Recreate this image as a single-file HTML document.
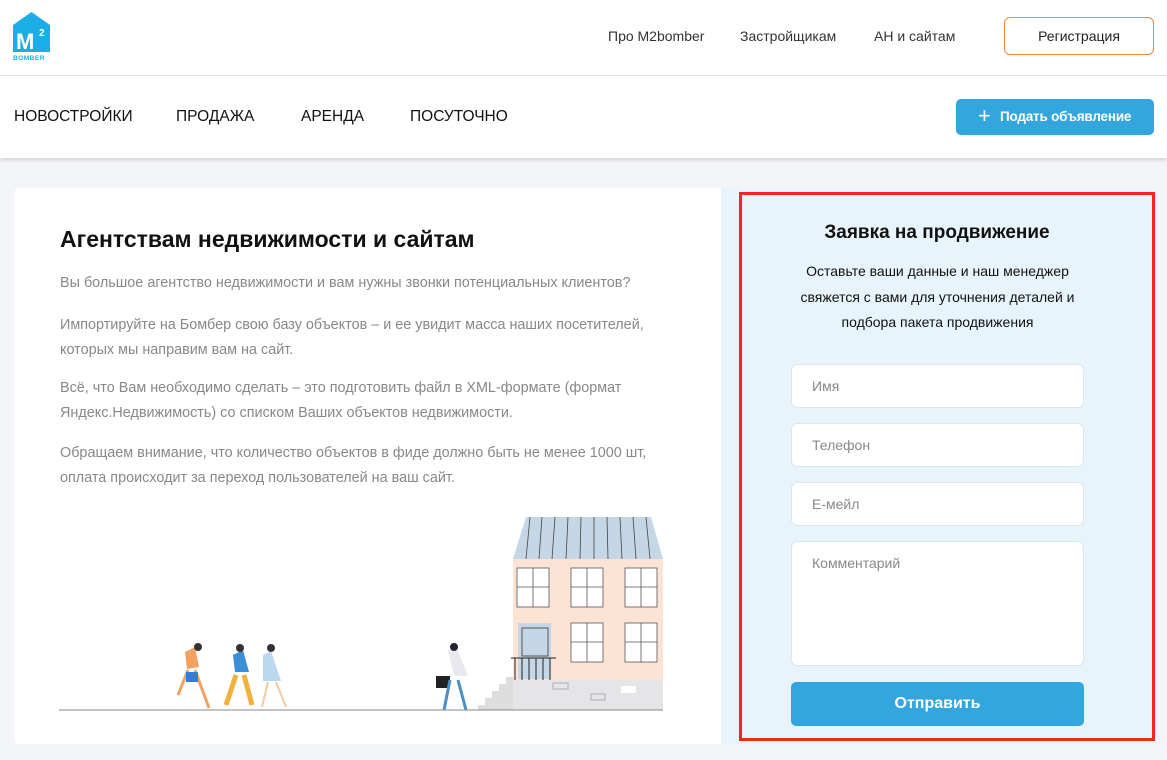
<!DOCTYPE html>
<html><head><meta charset="utf-8"><style>
*{margin:0;padding:0;box-sizing:border-box}
body{width:1167px;height:760px;background:#f4f5f8;font-family:"Liberation Sans",Arial,sans-serif;position:relative;overflow:hidden;color:#222}
.hdr{position:absolute;left:0;top:0;width:1167px;height:158px;background:#fff;box-shadow:0 2px 4px rgba(0,0,0,.15)}
.line{position:absolute;left:0;top:75px;width:1167px;height:1px;background:#dfe2e4}
.t{position:absolute;font-size:14px;color:#333}
.nav{position:absolute;top:108px;font-size:15.5px;color:#111}
.reg{position:absolute;left:1004px;top:17px;width:150px;height:38px;border:1px solid #f08a3c;border-radius:6px;font-size:14px;text-align:center;line-height:36px;color:#222}
.add{position:absolute;left:956px;top:99px;width:198px;height:36px;background:#33a6de;border-radius:5px;color:#fff;font-size:13.5px;font-weight:bold;line-height:36px;padding-left:44px;letter-spacing:-0.2px}
.card{position:absolute;left:14px;top:188px;width:707px;height:556px;background:#fff;border-radius:6px 0 0 6px}
.p{position:absolute;left:60px;font-size:14.4px;color:#888;line-height:25px;width:600px}
.right{position:absolute;left:721px;top:188px;width:431px;height:556px;background:#e8f4fb}
.red{position:absolute;left:739px;top:192px;width:416px;height:549px;border:3px solid #f0281e}
.in{position:absolute;left:791px;width:293px;height:44px;background:#fff;border:1px solid #dde6ec;border-radius:6px;font-size:14px;color:#888;padding:13px 20px}
</style></head><body>
<div class="hdr"></div>
<div class="line"></div>
<svg style="position:absolute;left:13px;top:12px" width="38" height="50" viewBox="0 0 38 50"><path d="M0 13 L18.5 0 L37 13 V40 H0Z" fill="#1aaee4"/><text x="3" y="37" font-size="22" font-weight="bold" fill="#fff" font-family="Liberation Sans">M</text><text x="26" y="24" font-size="10" font-weight="bold" fill="#fff" font-family="Liberation Sans">2</text><text x="0" y="48" font-size="6.5" font-weight="bold" fill="#1aaee4" font-family="Liberation Sans" letter-spacing="0.5">BOMBER</text></svg>
<div class="t" style="left:608px;top:28px">Про M2bomber</div>
<div class="t" style="left:740px;top:28px">Застройщикам</div>
<div class="t" style="left:874px;top:28px">АН и сайтам</div>
<div class="reg">Регистрация</div>
<div class="nav" style="left:14px">НОВОСТРОЙКИ</div>
<div class="nav" style="left:176px">ПРОДАЖА</div>
<div class="nav" style="left:301px">АРЕНДА</div>
<div class="nav" style="left:410px">ПОСУТОЧНО</div>
<div class="add"><span style="position:absolute;left:22px;top:-1px;font-size:22px;font-weight:normal">+</span>Подать объявление</div>
<div class="card"></div>
<div style="position:absolute;left:60px;top:226px;font-size:23px;font-weight:bold;color:#111">Агентствам недвижимости и сайтам</div>
<div class="p" style="top:271px">Вы большое агентство недвижимости и вам нужны звонки потенциальных клиентов?</div>
<div class="p" style="top:313px">Импортируйте на Бомбер свою базу объектов – и ее увидит масса наших посетителей, которых мы направим вам на сайт.</div>
<div class="p" style="top:376px">Всё, что Вам необходимо сделать – это подготовить файл в XML-формате (формат Яндекс.Недвижимость) со списком Ваших объектов недвижимости.</div>
<div class="p" style="top:441px">Обращаем внимание, что количество объектов в фиде должно быть не менее 1000 шт, оплата происходит за переход пользователей на ваш сайт.</div>
<svg style="position:absolute;left:0;top:500px" width="720" height="220">
<path d="M526 17 H651 L663 59 H513Z" fill="#c5d6e6"/>
<g stroke="#444" stroke-width="0.8"><path d="M530 17 L526 59M542 17 L539 59M555 17 L552 59M568 17 L566 59M581 17 L580 59M594 17 L594 59M607 17 L608 59M620 17 L622 59M633 17 L636 59M646 17 L650 59"/></g>
<rect x="513" y="59" width="150" height="121" fill="#fde3d4"/>
<rect x="513" y="180" width="150" height="30" fill="#e5e5e7"/>
<g fill="#fff" stroke="#555" stroke-width="0.8">
<rect x="517" y="68" width="32" height="39"/><rect x="571" y="68" width="32" height="39"/><rect x="625" y="68" width="32" height="39"/>
<rect x="571" y="123" width="32" height="39"/><rect x="625" y="123" width="32" height="39"/></g>
<g stroke="#555" stroke-width="0.8"><path d="M533 68V107M517 87H549M587 68V107M571 87H603M641 68V107M625 87H657M587 123V162M571 142H603M641 123V162M625 142H657"/></g>
<rect x="518" y="123" width="33" height="56" fill="#c5d6e6"/>
<rect x="522" y="128" width="26" height="28" fill="none" stroke="#555"/>
<path d="M511 158H556M515 158V180M522 158V180M529 158V180M536 158V180M543 158V180M550 158V180" stroke="#222" stroke-width="1"/>
<rect x="553" y="183" width="15" height="6" fill="none" stroke="#aab"/><rect x="591" y="194" width="14" height="6" fill="none" stroke="#aab"/><rect x="621" y="186" width="15" height="7" fill="#fff"/>
<path d="M478 210H513V177H506V184H499V191H492V198H485V205H478Z" fill="#ddd"/>
<path d="M436 176h14v12h-14z" fill="#222"/><path d="M448 150 l8 -4 l12 30 h-14z" fill="#e8e8ee"/><circle cx="454" cy="147" r="4" fill="#223"/><path d="M450 180 l-6 30M458 180 l8 30" stroke="#4a8ec8" stroke-width="3"/>
<path d="M185 152 l10 -5 l4 20 l-12 2z" fill="#f2a160"/><circle cx="198" cy="147" r="4" fill="#333"/><path d="M188 170 l-10 25M195 170 l14 38" stroke="#f2a160" stroke-width="3"/><rect x="186" y="172" width="12" height="10" fill="#3a7bd5"/>
<path d="M233 155 l10 -5 l6 22 l-14 0z" fill="#3b8fd9"/><circle cx="240" cy="148" r="4" fill="#333"/><path d="M236 175 l-10 30M244 175 l8 30" stroke="#f4b13a" stroke-width="5"/>
<path d="M263 155 l8 -4 l10 30 l-18 0z" fill="#bcd8f0"/><circle cx="271" cy="148" r="4" fill="#333"/><path d="M268 182 l-6 25M276 182 l10 25" stroke="#f2c9a0" stroke-width="2"/>
<path d="M59 210H663" stroke="#888" stroke-width="1"/>
</svg>
<div class="right"></div>
<div class="red"></div>
<div style="position:absolute;width:396px;top:222px;text-align:center;font-size:19px;font-weight:bold;color:#111;left:739px">Заявка на продвижение</div>
<div style="position:absolute;left:780px;width:315px;top:259px;text-align:center;font-size:14px;line-height:25.5px;color:#111">Оставьте ваши данные и наш менеджер свяжется с вами для уточнения деталей и подбора пакета продвижения</div>
<div class="in" style="top:364px">Имя</div>
<div class="in" style="top:423px">Телефон</div>
<div class="in" style="top:482px">E-мейл</div>
<div class="in" style="top:541px;height:125px">Комментарий</div>
<div style="position:absolute;left:791px;top:682px;width:293px;height:44px;background:#33a6de;border-radius:5px;color:#fff;font-size:16px;font-weight:bold;text-align:center;line-height:44px">Отправить</div>
</body></html>
